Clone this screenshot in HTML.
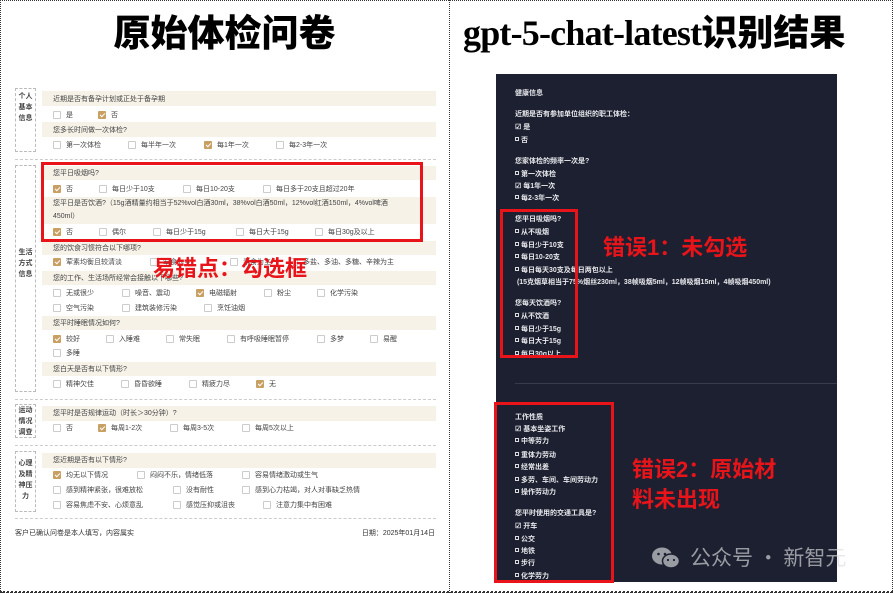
<!DOCTYPE html>
<html><head><meta charset="utf-8"><style>
*{margin:0;padding:0;box-sizing:border-box}
body{width:893px;height:593px;background:#fff;position:relative;overflow:hidden;font-family:"Liberation Sans","Noto Sans CJK SC",sans-serif}
.a{position:absolute;white-space:nowrap}
.t{font-size:7px;color:#444;line-height:9px}
.bg{position:absolute;left:42px;width:394px;background:#f6f2e8}
.cb{position:absolute;width:8px;height:8px;border:1px solid #ccc;background:#fff;border-radius:1px}
.ck{background:#c9a063;border-color:#c9a063}
.ck:after{content:"";position:absolute;left:2px;top:0px;width:2px;height:4px;border:solid #fff;border-width:0 1px 1px 0;transform:rotate(45deg)}
.lab{position:absolute;left:15px;width:21px;border:1px dashed #bbb;font-size:7px;font-weight:bold;color:#444;text-align:center;line-height:11px}
.dl{position:absolute;left:15px;width:421px;border-top:1px dashed #ccc}
.r{font-size:7px;color:#e8e8ec;line-height:9px;font-weight:bold}
.sq{display:inline-block;width:4px;height:4px;border:1px solid #ddd;margin-right:2px;vertical-align:1px}
.rb{position:absolute;border:3px solid #e8141a}
.red{color:#e8141a;font-weight:bold;font-size:22px;font-family:"Liberation Sans","Noto Sans CJK SC",sans-serif}
</style></head><body>
<div class="a" style="left:0;top:0;width:893px;height:593px;border:1px dotted #333"></div>
<div class="a" style="left:449px;top:0;height:593px;border-left:1px dotted #333"></div>
<div class="a" style="left:0;top:591px;width:893px;border-top:2px dotted #333"></div>
<div class="a" style="left:0;top:6px;width:449px;text-align:center;font-size:37px;font-weight:900;font-family:'Noto Sans CJK SC',sans-serif;line-height:48px;color:#000">原始体检问卷</div>
<div class="a" style="left:463px;top:6px;font-size:36px;font-weight:bold;font-family:'Liberation Serif','Noto Sans CJK SC',serif;line-height:48px;color:#000;letter-spacing:-0.8px">gpt-5-chat-latest<span style="font-family:'Noto Sans CJK SC',sans-serif;font-weight:900;letter-spacing:0">识别结果</span></div>

<div class="lab" style="top:88px;height:64px;padding-top:2px">个人<br>基本<br>信息</div>
<div class="lab" style="top:165px;height:227px;padding-top:37px"><br><br><br><br>生活<br>方式<br>信息</div>
<div class="lab" style="top:404px;height:34px;padding-top:0">运动<br>情况<br>调查</div>
<div class="lab" style="top:451px;height:61px;padding-top:6px">心理<br>及精<br>神压<br>力</div>
<div class="dl" style="top:159px"></div><div class="dl" style="top:399px"></div><div class="dl" style="top:445px"></div><div class="dl" style="top:518px"></div>

<div class="bg" style="top:91px;height:15px"></div>
<div class="bg" style="top:122px;height:15px"></div>
<div class="bg" style="top:166px;height:14px"></div>
<div class="bg" style="top:197px;height:27px"></div>
<div class="bg" style="top:241px;height:14px"></div>
<div class="bg" style="top:271px;height:14px"></div>
<div class="bg" style="top:316px;height:14px"></div>
<div class="bg" style="top:362px;height:14px"></div>
<div class="bg" style="top:406px;height:15px"></div>
<div class="bg" style="top:453px;height:15px"></div>

<div class="a t" style="left:53px;top:95px">近期是否有备孕计划或正处于备孕期</div>
<div class="a t" style="left:53px;top:126px">您多长时间做一次体检?</div>
<div class="a t" style="left:53px;top:169px">您平日吸烟吗?</div>
<div class="a t" style="left:53px;top:199px">您平日是否饮酒?（15g酒精量约相当于52%vol白酒30ml，38%vol白酒50ml，12%vol红酒150ml，4%vol啤酒</div>
<div class="a t" style="left:53px;top:212px">450ml）</div>
<div class="a t" style="left:53px;top:244px">您的饮食习惯符合以下哪项?</div>
<div class="a t" style="left:53px;top:274px">您的工作、生活场所经常会接触以下哪些?</div>
<div class="a t" style="left:53px;top:319px">您平时睡眠情况如何?</div>
<div class="a t" style="left:53px;top:365px">您白天是否有以下情形?</div>
<div class="a t" style="left:53px;top:409px">您平时是否规律运动（时长＞30分钟）?</div>
<div class="a t" style="left:53px;top:456px">您近期是否有以下情形?</div>

<div id="opts"></div>
<script>
var O=[[115,[[53,"是",0],[98,"否",1]]],[145,[[53,"第一次体检",0],[128,"每半年一次",0],[204,"每1年一次",1],[276,"每2-3年一次",0]]],
[189,[[53,"否",1],[99,"每日少于10支",0],[183,"每日10-20支",0],[263,"每日多于20支且超过20年",0]]],
[232,[[53,"否",1],[99,"偶尔",0],[153,"每日少于15g",0],[236,"每日大于15g",0],[315,"每日30g及以上",0]]],
[262,[[53,"荤素均衡且较清淡",1],[150,"荤食为主",0],[230,"素食为主",0],[290,"多盐、多油、多糖、辛辣为主",0]]],
[293,[[53,"无或很少",0],[122,"噪音、震动",0],[196,"电磁辐射",1],[264,"粉尘",0],[317,"化学污染",0]]],
[308,[[53,"空气污染",0],[122,"建筑装修污染",0],[204,"烹饪油烟",0]]],
[339,[[53,"较好",1],[106,"入睡难",0],[166,"常失眠",0],[227,"有呼吸睡眠暂停",0],[317,"多梦",0],[370,"易醒",0]]],
[353,[[53,"多睡",0]]],
[384,[[53,"精神欠佳",0],[121,"昏昏欲睡",0],[189,"精疲力尽",0],[256,"无",1]]],
[428,[[53,"否",0],[98,"每周1-2次",1],[170,"每周3-5次",0],[242,"每周5次以上",0]]],
[475,[[53,"均无以下情况",1],[137,"闷闷不乐，情绪低落",0],[242,"容易情绪激动或生气",0]]],
[490,[[53,"感到精神紧张，很难放松",0],[173,"没有耐性",0],[242,"感到心力枯竭，对人对事缺乏热情",0]]],
[505,[[53,"容易焦虑不安、心烦意乱",0],[173,"感觉压抑或沮丧",0],[263,"注意力集中有困难",0]]]];
var h="";O.forEach(function(r){r[1].forEach(function(o){h+='<div class="cb'+(o[2]?' ck':'')+'" style="left:'+o[0]+'px;top:'+(r[0]-4)+'px"></div><div class="a t" style="left:'+(o[0]+13)+'px;top:'+(r[0]-4.5)+'px">'+o[1]+'</div>';});});
document.getElementById("opts").outerHTML=h;
</script>
<div class="a t" style="left:15px;top:529px;color:#333">客户已确认问卷是本人填写，内容属实</div>
<div class="a t" style="right:458px;top:529px;color:#333">日期：2025年01月14日</div>
<div class="rb" style="left:41px;top:162px;width:382px;height:80px"></div>
<div class="a red" style="left:153px;top:255px;line-height:28px">易错点：勾选框</div>

<div class="a" style="left:496px;top:74px;width:341px;height:508px;background:#1c2030"></div>
<div class="a" style="left:515px;top:383px;width:322px;border-top:1px solid #363c4c"></div>
<div id="rp"></div>
<script>
var S='<span class="sq"></span>';
var R=[[93,"健康信息"],[114,"近期是否有参加单位组织的职工体检："],[127,"☑ 是"],[140,S+"否"],[161,"您家体检的频率一次是?"],[174,S+"第一次体检"],[186,"☑ 每1年一次"],[198,S+"每2-3年一次"],
[219,"您平日吸烟吗?"],[232,S+"从不吸烟"],[245,S+"每日少于10支"],[257,S+"每日10-20支"],[270,S+"每日每天30支及每日两包以上"],[282,"&nbsp;(15克烟草相当于75%烟丝230ml，38帧吸烟5ml，12帧吸烟15ml，4帧吸烟450ml)"],
[303,"您每天饮酒吗?"],[316,S+"从不饮酒"],[329,S+"每日少于15g"],[341,S+"每日大于15g"],[354,S+"每日30g以上"],
[417,"工作性质"],[429,"☑ 基本坐姿工作"],[441,S+"中等劳力"],[455,S+"重体力劳动"],[467,S+"经常出差"],[480,S+"多劳、车间、车间劳动力"],[492,S+"操作劳动力"],
[513,"您平时使用的交通工具是?"],[526,"☑ 开车"],[539,S+"公交"],[551,S+"地铁"],[563,S+"步行"],[576,S+"化学劳力"]];
var g="";R.forEach(function(r){g+='<div class="a r" style="left:515px;top:'+(r[0]-4.5)+'px">'+r[1]+'</div>';});
document.getElementById("rp").outerHTML=g;
</script>
<div class="a" style="left:496px;top:356px;width:80px;height:3px;background:#1c2030"></div>
<div class="rb" style="left:500px;top:209px;width:78px;height:149px"></div>
<div class="rb" style="left:494px;top:402px;width:120px;height:181px"></div>
<div class="a red" style="left:603px;top:234px;line-height:28px">错误1：未勾选</div>
<div class="a red" style="left:632px;top:455px;line-height:30px">错误2：原始材<br>料未出现</div>
<svg class="a" style="left:651px;top:546px" width="30" height="24" viewBox="0 0 30 24"><ellipse cx="11" cy="10" rx="10" ry="8.5" fill="#9a9ca3"/><ellipse cx="20" cy="15" rx="8.5" ry="7" fill="#9a9ca3" stroke="#1c2030" stroke-width="1.5"/><circle cx="7.5" cy="8" r="1.3" fill="#1c2030"/><circle cx="14" cy="8" r="1.3" fill="#1c2030"/><circle cx="17" cy="14" r="1.1" fill="#1c2030"/><circle cx="23" cy="14" r="1.1" fill="#1c2030"/></svg>
<div class="a" style="left:690px;top:543px;font-size:21px;line-height:28px;color:#9a9ca3;font-family:'Noto Sans CJK SC',sans-serif">公众号 · 新智元</div>
<div class="a" style="left:837px;top:530px;width:52px;height:60px;background:linear-gradient(90deg,rgba(255,255,255,.75),#fff)"></div>
</body></html>
